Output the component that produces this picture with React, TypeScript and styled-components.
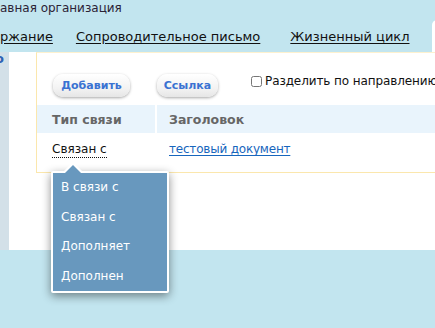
import React from 'react';
import styled, { createGlobalStyle } from 'styled-components';

const GlobalStyle = createGlobalStyle`
  html, body {
    margin: 0;
    padding: 0;
    background: #c2e5ef;
  }
  body {
    font-family: "DejaVu Sans", Verdana, sans-serif;
    color: #222;
  }
`;

const Page = styled.div`
  width: 435px;
  height: 328px;
  overflow: hidden;
  background: #c2e5ef;
  display: flex;
  flex-direction: column;
`;

const OrgLine = styled.div`
  height: 20px;
  font-size: 12px;
  line-height: 17px;
  color: #2b2235;
  white-space: nowrap;
`;

const Tabs = styled.div`
  height: 32px;
  display: flex;
  align-items: flex-end;
  gap: 30px;
  white-space: nowrap;
`;

const Tab = styled.a<{ $tight?: boolean }>`
  font-size: 13px;
  line-height: 17px;
  padding-bottom: 7px;
  margin-right: ${p => (p.$tight ? -7 : 0)}px;
  color: #111;
  text-decoration: underline;
  text-underline-offset: 2px;
`;

const ActiveTab = styled.div`
  align-self: stretch;
  margin-left: -8px;
  width: 60px;
  flex-shrink: 0;
  background: #fff;
  border-radius: 5px 5px 0 0;
`;

const Body = styled.div`
  height: 198px;
  display: flex;
`;

const Strip = styled.div`
  width: 9px;
  flex-shrink: 0;
  background: #d3e0e8;
  overflow: hidden;
`;

const StripGlyph = styled.span`
  display: block;
  margin: -1px 0 0 -5px;
  font-size: 13px;
  font-weight: bold;
  color: #2f62b4;
`;

const Content = styled.div`
  flex: 1;
  background: #fff;
  padding-left: 27px;
`;

const Panel = styled.div`
  height: 119px;
  border-left: 1px solid #fbe7ad;
  border-top: 1px solid #fdf1cf;
  border-bottom: 1px solid #fbe7ad;
  margin-right: -20px;
`;

const Toolbar = styled.div`
  display: flex;
  align-items: center;
  padding: 21px 0 0 16px;
  height: 23px;
  white-space: nowrap;
`;

const Button = styled.button<{ $w: number }>`
  width: ${p => p.$w}px;
  height: 23px;
  margin-right: 27px;
  padding: 0;
  border: none;
  border-radius: 10px;
  background: linear-gradient(#ffffff, #f3f3f3 60%, #e6e6e6);
  box-shadow: 0 1px 3px rgba(0, 0, 0, 0.35);
  font-family: "DejaVu Sans", Verdana, sans-serif;
  font-size: 11px;
  font-weight: bold;
  color: #3a72d2;
`;

const Check = styled.label`
  display: flex;
  align-items: center;
  gap: 3px;
  margin-left: 6px;
  margin-top: -9px;
  font-size: 12px;
  letter-spacing: -0.1px;
  color: #111;

  input {
    margin: 0;
    width: 11px;
    height: 11px;
  }
`;

const Table = styled.div`
  margin-top: 8px;
`;

const Row = styled.div<{ $head?: boolean }>`
  display: grid;
  grid-template-columns: 118px 1fr;
  height: ${p => (p.$head ? 28 : 32)}px;
  background: ${p => (p.$head ? '#e9f4fc' : '#fff')};
`;

const Cell = styled.div<{ $head?: boolean }>`
  position: relative;
  display: flex;
  align-items: center;
  padding-left: 15px;
  font-size: ${p => (p.$head ? 12.5 : 12)}px;
  font-weight: ${p => (p.$head ? 'bold' : 'normal')};
  color: ${p => (p.$head ? '#666' : '#111')};
  white-space: nowrap;
  & + & {
    border-left: 2px solid #fff;
    padding-left: 12px;
  }
`;

const DottedLink = styled.span`
  border-bottom: 1px dotted #111;
  line-height: 15px;
  margin-top: 2px;
`;

const DocLink = styled.a`
  color: #1766bd;
  letter-spacing: -0.2px;
  text-decoration: underline;
  text-underline-offset: 2px;
`;

const Popup = styled.div`
  position: absolute;
  left: 14px;
  top: 38px;
  width: 114px;
  background: #6898be;
  border: 2px solid #fff;
  border-radius: 2px;
  box-shadow: 0 3px 10px rgba(0, 0, 0, 0.45);
  z-index: 5;

  &::before {
    content: '';
    position: absolute;
    left: 9px;
    top: -11px;
    border: 11px solid transparent;
    border-top: 0;
    border-bottom-color: #fff;
  }
  &::after {
    content: '';
    position: absolute;
    left: 11px;
    top: -8px;
    border: 9px solid transparent;
    border-top: 0;
    border-bottom-color: #6898be;
  }
`;

const Item = styled.div`
  height: 29.5px;
  line-height: 29.5px;
  padding-left: 8px;
  font-size: 12px;
  color: #fff;
`;

const App = () => {
  const options = ['В связи с', 'Связан с', 'Дополняет', 'Дополнен'];
  return (
    <>
      <GlobalStyle />
      <Page>
        <OrgLine>авная организация</OrgLine>
        <Tabs>
          <Tab $tight>ржание</Tab>
          <Tab>Сопроводительное письмо</Tab>
          <Tab>Жизненный цикл</Tab>
          <ActiveTab />
        </Tabs>
        <Body>
          <Strip>
            <StripGlyph>о</StripGlyph>
          </Strip>
          <Content>
            <Panel>
              <Toolbar>
                <Button $w={77}>Добавить</Button>
                <Button $w={61}>Ссылка</Button>
                <Check>
                  <input type="checkbox" />
                  Разделить по направлению
                </Check>
              </Toolbar>
              <Table>
                <Row $head>
                  <Cell $head>Тип связи</Cell>
                  <Cell $head>Заголовок</Cell>
                </Row>
                <Row>
                  <Cell>
                    <DottedLink>Связан с</DottedLink>
                    <Popup>
                      {options.map(o => (
                        <Item key={o}>{o}</Item>
                      ))}
                    </Popup>
                  </Cell>
                  <Cell>
                    <DocLink>тестовый документ</DocLink>
                  </Cell>
                </Row>
              </Table>
            </Panel>
          </Content>
        </Body>
      </Page>
    </>
  );
};

export default App;
